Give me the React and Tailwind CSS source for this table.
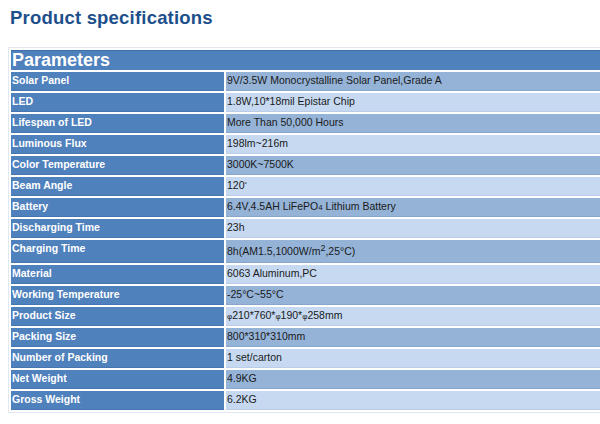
import React from 'react';

const specs = [
  { label: 'Solar Panel', value: '9V/3.5W Monocrystalline Solar Panel,Grade A' },
  { label: 'LED', value: '1.8W,10*18mil Epistar Chip' },
  { label: 'Lifespan of LED', value: 'More Than 50,000 Hours' },
  { label: 'Luminous Flux', value: '198lm~216m' },
  { label: 'Color Temperature', value: '3000K~7500K' },
  { label: 'Beam Angle', value: <>120<span className="text-[8px] align-top">˚</span></> },
  { label: 'Battery', value: <>6.4V,4.5AH LiFePO<span className="text-[8px]">4</span> Lithium Battery</> },
  { label: 'Discharging Time', value: '23h' },
  { label: 'Charging Time', value: <>8h(AM1.5,1000W/m<sup className="text-[9px]">2</sup>,25°C)</>, tall: true },
  { label: 'Material', value: '6063 Aluminum,PC' },
  { label: 'Working Temperature', value: '-25°C~55°C' },
  {
    label: 'Product Size',
    value: <><span className="text-[8px]">φ</span>210*760*<span className="text-[8px]">φ</span>190*<span className="text-[8px]">φ</span>258mm</>,
  },
  { label: 'Packing Size', value: '800*310*310mm' },
  { label: 'Number of Packing', value: '1 set/carton' },
  { label: 'Net Weight', value: '4.9KG' },
  { label: 'Gross Weight', value: '6.2KG' },
];

const App = () => {
  return (
    <div className="w-[600px] h-[424px] overflow-hidden bg-white font-['Liberation_Sans',Arial,sans-serif]">
      {/* Title */}
      <h1 className="pl-[10px] pt-[7px] text-[18.5px] leading-[22px] font-bold text-[#1d4f8b] tracking-[0.2px]">
        Product specifications
      </h1>

      {/* Spec table */}
      <table className="ml-[8px] mt-[18px] w-[640px] border border-[#e3e8ee] border-separate border-spacing-[2px]">
        <tbody>
          <tr>
            <td colSpan="2" className="h-[20px] px-[1px] bg-[#4f81bd] border-t border-[#3f6ea8] text-white text-[18px] leading-[19px] font-bold align-middle">
              Parameters
            </td>
          </tr>
          {specs.map((row, i) => (
            <tr key={row.label}>
              <td className={`w-[213px] px-[1px] bg-[#4f81bd] border-b border-[#4675b0] text-white text-[10.5px] font-bold align-top ${row.tall ? 'h-[23px] leading-[17px]' : 'h-[19px] leading-[17px]'}`}>
                {row.label}
              </td>
              <td className={`px-[1px] text-[10.5px] text-[#1a1a1a] border-b align-top ${row.tall ? 'h-[23px] leading-[22px]' : 'h-[19px] leading-[17px]'} ${i % 2 === 0 ? 'bg-[#95b3d7] border-[#87a6cc]' : 'bg-[#c6d9f1] border-[#b9cde8]'}`}>
                {row.value}
              </td>
            </tr>
          ))}
        </tbody>
      </table>
    </div>
  );
};

export default App;
